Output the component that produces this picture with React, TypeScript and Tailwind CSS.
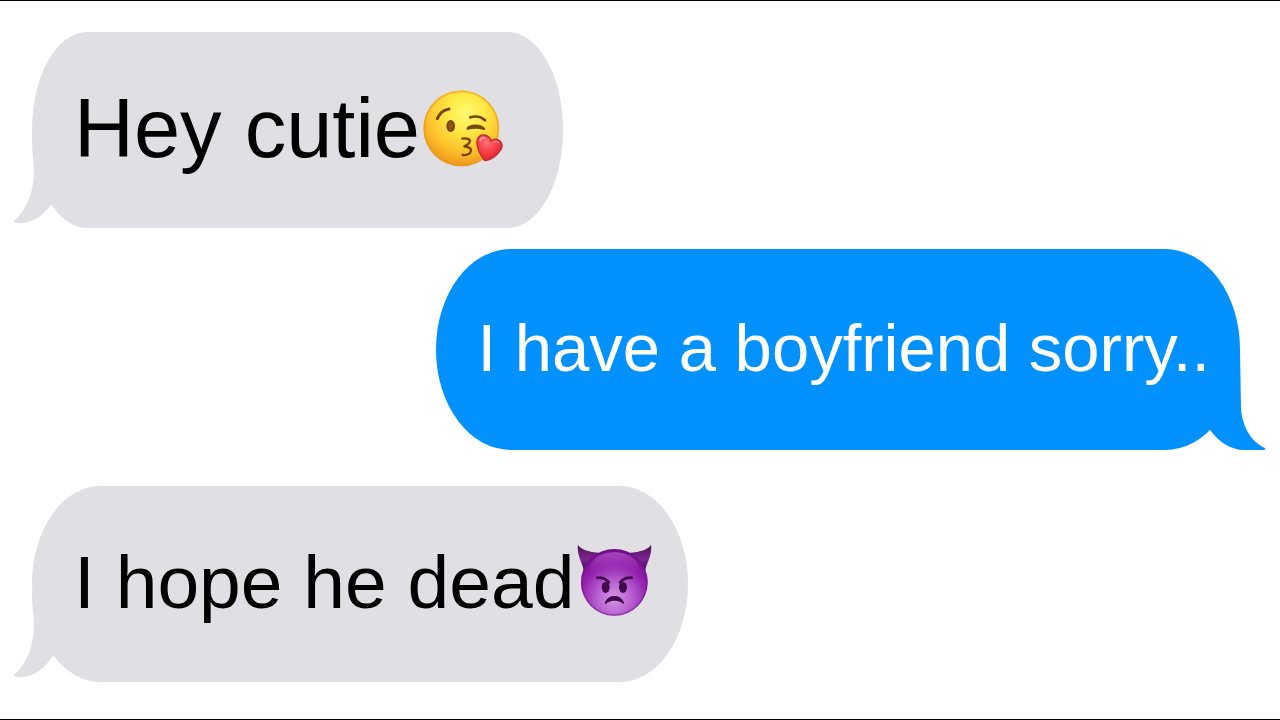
import React from 'react';
import { clsx } from 'clsx';

interface BubbleProps {
  side: 'left' | 'right';
  className: string;
  children: React.ReactNode;
}

const KissEmoji: React.FC = () => (
  <svg viewBox="15 28 240 231" className="w-20 h-[77px] shrink-0" role="img" aria-label="Face blowing a kiss">
    <defs>
      <radialGradient id="kissFace" cx="0.56" cy="0.3" r="0.72">
        <stop offset="0" stopColor="#fffa70" />
        <stop offset="0.35" stopColor="#ffe845" />
        <stop offset="0.7" stopColor="#fdc22b" />
        <stop offset="1" stopColor="#ec911c" />
      </radialGradient>
      <radialGradient id="kissHeart" cx="0.4" cy="0.3" r="0.75">
        <stop offset="0" stopColor="#ff7377" />
        <stop offset="0.5" stopColor="#fb3e45" />
        <stop offset="1" stopColor="#d71f30" />
      </radialGradient>
    </defs>
    <circle cx="130" cy="143" r="114" fill="url(#kissFace)" />
    <circle cx="130" cy="143" r="111" fill="none" stroke="#ea9a1c" strokeWidth="5" opacity="0.6" />
    <g fill="none" stroke="#79450a" strokeLinecap="round" strokeLinejoin="round">
      <path d="M58 114 C64 99 76 88 93 85" strokeWidth="9" />
      <path d="M157 110 C173 105 190 109 201 119" strokeWidth="8" />
      <path d="M149 144 C156 132 189 132 198 145 C183 140 165 140 149 144Z" fill="#79450a" strokeWidth="7" />
      <path
        d="M133 174 C146 172 156 175 156 181 C156 187 147 193 139 197 C149 198 160 202 159 210 C157 220 145 224 134 223"
        strokeWidth="7"
      />
    </g>
    <ellipse cx="98" cy="136" rx="13" ry="18" fill="#79450a" />
    <ellipse cx="98" cy="136" rx="6" ry="12" fill="#915811" />
    <path
      d="M200 240 C188 225 179 205 177 190 C175 170 187 161 198 163 C210 165 217 172 219 181 C228 173 239 175 247 182 C258 194 249 210 236 222 C225 232 214 238 200 240Z"
      fill="url(#kissHeart)"
      stroke="#bd2a2e"
      strokeWidth="4"
    />
    <path d="M186 179 C189 171 195 170 200 172" fill="none" stroke="#ffa3a3" strokeWidth="5" strokeLinecap="round" />
    <path d="M228 185 C233 181 239 183 242 187" fill="none" stroke="#ff9090" strokeWidth="4" strokeLinecap="round" />
  </svg>
);

const DevilEmoji: React.FC = () => (
  <svg viewBox="18 27 225 228" className="w-[75px] h-[76px] shrink-0" role="img" aria-label="Angry face with horns">
    <defs>
      <radialGradient id="devilFace" cx="0.5" cy="0.74" r="0.72">
        <stop offset="0" stopColor="#d794e8" />
        <stop offset="0.35" stopColor="#b962d1" />
        <stop offset="0.7" stopColor="#9220ae" />
        <stop offset="1" stopColor="#740e8c" />
      </radialGradient>
      <linearGradient id="devilShine" x1="0" y1="0" x2="0" y2="1">
        <stop offset="0" stopColor="#bd63d0" stopOpacity="0.65" />
        <stop offset="0.7" stopColor="#aa48c2" stopOpacity="0" />
      </linearGradient>
      <linearGradient id="devilHorn" x1="0" y1="0" x2="0" y2="1">
        <stop offset="0" stopColor="#48134f" />
        <stop offset="0.55" stopColor="#7d2490" />
        <stop offset="1" stopColor="#4b0d5c" />
      </linearGradient>
    </defs>
    <path d="M21 29 C29 43 48 50 90 54 L66 90 L38 106 C36 88 16 60 21 29Z" fill="url(#devilHorn)" />
    <path d="M240 29 C232 43 213 50 171 54 L195 90 L223 106 C225 88 245 60 240 29Z" fill="url(#devilHorn)" />
    <circle cx="130" cy="142" r="100" fill="url(#devilFace)" />
    <circle cx="130" cy="142" r="98" fill="none" stroke="#65107e" strokeWidth="4" opacity="0.5" />
    <ellipse cx="130" cy="98" rx="72" ry="46" fill="url(#devilShine)" />
    <g fill="none" stroke="#410b4b" strokeLinecap="round">
      <path d="M79 128 C94 127 106 133 114 142" strokeWidth="8" />
      <path d="M182 128 C167 127 155 133 147 142" strokeWidth="8" />
    </g>
    <ellipse cx="104" cy="157" rx="12" ry="17" fill="#410b4b" />
    <ellipse cx="156" cy="157" rx="12" ry="17" fill="#410b4b" />
    <path d="M103 206 C106 177 154 177 158 206 C142 192 119 192 103 206Z" fill="#410b4b" stroke="#410b4b" strokeWidth="3" />
  </svg>
);

const Tail: React.FC<{ side: 'left' | 'right' }> = ({ side }) =>
  side === 'left' ? (
    <svg viewBox="0 0 60 88" className="absolute -left-5 bottom-0 w-[60px] h-[88px]" fill="#e0dfe4" aria-hidden="true">
      <path d="M20 0 C20 14 22 20 22 31 C22 51 15 70 1 82 C15 86 31 78 40 63 L60 40 L50 0Z" />
    </svg>
  ) : (
    <svg viewBox="0 0 66 100" className="absolute -right-[26px] bottom-0 w-[66px] h-[100px]" fill="#0291fd" aria-hidden="true">
      <path d="M40 0 L41 58 C42 76 51 92 65 98 Q66 100 63 100 L45 100 C30 100 19 92 10 80 L0 50 L10 0Z" />
    </svg>
  );

const Bubble: React.FC<BubbleProps> = ({ side, className, children }) => (
  <li
    className={clsx(
      'relative flex items-center gap-[3px] pb-1 pl-[42px] leading-none whitespace-nowrap',
      side === 'left' ? 'self-start bg-[#e0dfe4] text-black' : 'self-end bg-[#0291fd] text-white',
      className
    )}
  >
    <Tail side={side} />
    {children}
  </li>
);

export default function App() {
  return (
    <main className="min-h-screen bg-white border-y border-black font-['Liberation_Sans',Arial,sans-serif]">
      <ul className="flex flex-col pt-[31px] pl-8 pr-10 pb-9">
        <Bubble side="left" className="min-h-[196px] pr-[60px] text-[83px] rounded-[55px/98px]">
          <p className="relative">Hey cutie</p>
          <KissEmoji />
        </Bubble>
        <Bubble side="right" className="min-h-[201px] mt-[21px] pr-[30px] text-[67px] rounded-[75px/100px]">
          <p className="relative">I have a boyfriend sorry..</p>
        </Bubble>
        <Bubble side="left" className="min-h-[196px] mt-9 pr-9 text-[75px] rounded-[68px/98px]">
          <p className="relative">I hope he dead</p>
          <DevilEmoji />
        </Bubble>
      </ul>
    </main>
  );
}
